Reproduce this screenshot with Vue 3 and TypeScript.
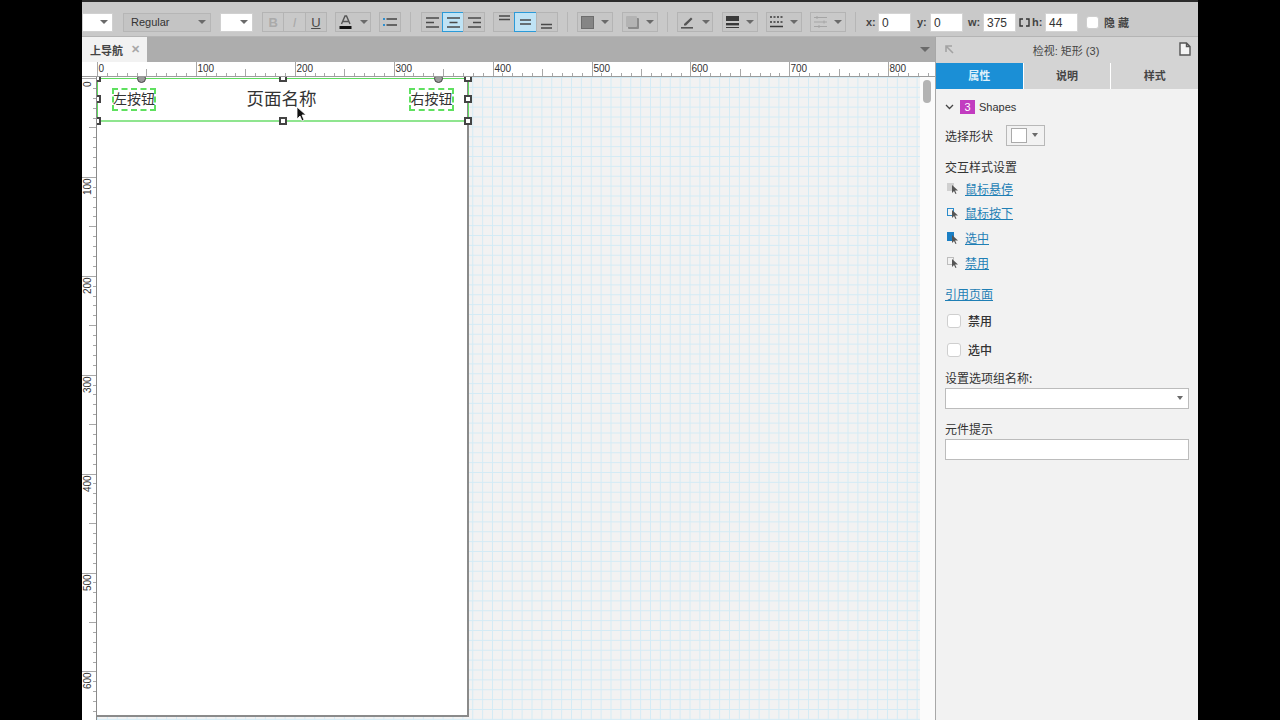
<template>
  <div class="stage">
    <div class="app">
      <!-- toolbar -->
      <div class="toolbar">
        <div class="sel white w-first"><i class="caret"></i></div>
        <div class="sel w-style"><span>Regular</span><i class="caret"></i></div>
        <div class="sel white w-size"><i class="caret"></i></div>
        <div class="group g65 m-bold">
          <button class="tb off"><b>B</b></button>
          <button class="tb off"><em>I</em></button>
          <button class="tb"><u>U</u></button>
        </div>
        <button class="tb drop m8">
          <svg width="14" height="14" viewBox="0 0 14 14"><path d="M2.5 9 6 1h1.5L11 9M4 6.5h5.5" fill="none" stroke="#555" stroke-width="1.4" /><rect x="0.5" y="11" width="12" height="3" fill="#111" /></svg>
          <i class="caret"></i>
        </button>
        <button class="tb m8">
          <svg width="14" height="10" viewBox="0 0 14 10"><rect x="0" y="1" width="2" height="2" fill="#2d8fd0" /><rect x="0" y="7" width="2" height="2" fill="#2d8fd0" /><path d="M3.5 2H14M3.5 8H14" stroke="#444" stroke-width="1.4" /></svg>
        </button>
        <div class="sep"></div>
        <div class="group align-group">
          <button v-for="(a, i) in alignIcons" :key="i" class="tb" :class="{ active: i === 1 }">
            <svg width="13" height="11" viewBox="0 0 13 11"><path :d="a" stroke="#4a4a4a" stroke-width="1.3" fill="none" /></svg>
          </button>
        </div>
        <div class="group g65 m8">
          <button v-for="(a, i) in valignIcons" :key="i" class="tb" :class="{ active: i === 1 }">
            <svg width="11" height="14" viewBox="0 0 11 14"><path :d="a" stroke="#4a4a4a" stroke-width="1.5" fill="none" /></svg>
          </button>
        </div>
        <div class="sep"></div>
        <button class="tb drop">
          <svg width="13" height="13" viewBox="0 0 13 13"><rect x="0.5" y="0.5" width="12" height="12" fill="#858585" stroke="#6d6d6d" /></svg>
          <i class="caret"></i>
        </button>
        <button class="tb drop m9">
          <svg width="13" height="13" viewBox="0 0 13 13"><rect x="2" y="2" width="11" height="11" rx="1" fill="#8a8a8a" /><rect x="0" y="0" width="11" height="11" rx="1" fill="#b3b3b3" /></svg>
          <i class="caret"></i>
        </button>
        <div class="sep"></div>
        <button class="tb drop">
          <svg width="14" height="13" viewBox="0 0 14 13"><path d="M3 8 10 1.5l1.5 1.500L5 9.500H3z" fill="#555" /><rect x="0" y="11" width="12" height="1.6" fill="#555" /></svg>
          <i class="caret"></i>
        </button>
        <button class="tb drop m9">
          <svg width="13" height="12" viewBox="0 0 13 12"><rect y="0" width="13" height="5" fill="#3a3a3a" /><rect y="7" width="13" height="2.4" fill="#3a3a3a" /><rect y="11" width="13" height="1" fill="#3a3a3a" /></svg>
          <i class="caret"></i>
        </button>
        <button class="tb drop m8">
          <svg width="13" height="12" viewBox="0 0 13 12"><path d="M0 1h13M0 6h13" stroke="#3a3a3a" stroke-width="1.5" stroke-dasharray="2 1.5" fill="none" /><path d="M0 10.500h13" stroke="#3a3a3a" stroke-width="1.5" fill="none" /></svg>
          <i class="caret"></i>
        </button>
        <button class="tb drop m8 off">
          <svg width="13" height="12" viewBox="0 0 13 12"><path d="M0 1.500h13M0 6h13M0 10.500h13" stroke="#a5a5a5" stroke-width="1" fill="none" /><path d="M3 0v3M10 4.500v3M5 9v3" stroke="#a5a5a5" fill="none" /></svg>
          <i class="caret"></i>
        </button>
        <div class="sep"></div>
        <label class="lab lab-x">x:</label><div class="num">0</div>
        <label class="lab lab-y">y:</label><div class="num">0</div>
        <label class="lab lab-w">w:</label><div class="num">375</div>
        <svg class="link-wh" width="11" height="9" viewBox="0 0 11 9"><path d="M4 1H1v7h3M7 1h3v7H7" stroke="#333" stroke-width="1.4" fill="none" /></svg>
        <label class="lab lab-h">h:</label><div class="num">44</div>
        <div class="box tool-check"></div>
        <span class="hide-label">隐 藏</span>
      </div>

      <div class="main">
        <!-- editor column -->
        <div class="editor">
          <div class="tabbar">
            <div class="tab">上导航<span class="tab-x">✕</span></div>
            <i class="caret tab-caret"></i>
          </div>
          <svg class="ruler-top" width="853" height="15">
            <g v-for="t in topTicks" :key="t.x">
              <line :x1="t.x" :x2="t.x" :y1="t.y" y2="15" stroke="#a8a8a8" />
            </g>
            <text v-for="l in topLabels" :key="l.text" :x="l.x + 1.5" y="9.500" class="ruler-text">{{ l.text }}</text>
          </svg>
          <div class="work">
            <svg class="ruler-left" width="15" height="643">
              <line v-for="t in leftTicks" :key="t.y" :x1="t.x" x2="15" :y1="t.y" :y2="t.y" stroke="#a8a8a8" />
              <text
                v-for="l in leftLabels"
                :key="l.text"
                class="ruler-text"
                :transform="`translate(9 ${l.y}) rotate(-90)`"
              >{{ l.text }}</text>
              <line x1="14.5" x2="14.5" y1="0" y2="643" stroke="#8a8a8a" />
            </svg>
            <div class="canvas">
              <div class="page">
                <div class="nav">
                  <span class="nav-btn">左按钮</span>
                  <span class="nav-title">页面名称</span>
                  <span class="nav-btn">右按钮</span>
                </div>
              </div>
              <i v-for="d in dots" :key="d" class="dot" :style="{ left: d + 'px' }"></i>
              <i
                v-for="(h, i) in handles"
                :key="i"
                class="handle"
                :style="{ left: h[0] + 'px', top: h[1] + 'px' }"
              ></i>
              <svg class="cursor" width="12" height="17" viewBox="0 0 12 17">
                <path d="M1 1v12l3-3 2 5 2-1-2-5h4z" fill="#111" stroke="#fff" stroke-width="0.8" />
              </svg>
            </div>
            <div class="scroll"><i class="thumb"></i></div>
          </div>
        </div>

        <!-- inspector -->
        <aside class="panel">
          <div class="panel-head">
            <svg class="head-arrow" width="9" height="9" viewBox="0 0 9 9"><path d="M1 7V1h6M1 1l7 7" stroke="#a3a3a3" stroke-width="1.6" fill="none" /></svg>
            <span>检视: 矩形 (3)</span>
            <svg class="head-page" width="12" height="14" viewBox="0 0 12 14"><path d="M1 1h6.500L11 4.500V13H1zM7.500 1v3.500H11" fill="#f4f4f4" stroke="#555" stroke-width="1.4" /></svg>
          </div>
          <div class="panel-tabs">
            <div class="ptab on">属性</div>
            <div class="ptab">说明</div>
            <div class="ptab">样式</div>
          </div>
          <div class="panel-body">
            <div class="shapes">
              <svg width="9" height="6" viewBox="0 0 9 6"><path d="M1 1l3.500 3.500L8 1" stroke="#444" stroke-width="1.3" fill="none" /></svg>
              <span class="badge">3</span>
              <span class="shapes-name">Shapes</span>
            </div>
            <div class="shape-row">
              <span>选择形状</span>
              <div class="shape-btn"><i class="swatch"></i><i class="caret"></i></div>
            </div>
            <div class="heading">交互样式设置</div>
            <div class="links">
              <div v-for="l in styleLinks" :key="l.text" class="link-row">
                <svg width="14" height="14" viewBox="0 0 14 14">
                  <rect v-if="l.kind === 'hover'" x="1" y="2" width="7" height="8" fill="#d0d0d0" />
                  <rect v-if="l.kind === 'down'" x="1.500" y="2.500" width="6" height="7" fill="none" stroke="#2b8ccb" />
                  <rect v-if="l.kind === 'sel'" x="1" y="1" width="7" height="9" fill="#1b7fc4" />
                  <rect v-if="l.kind === 'off'" x="1.500" y="2.500" width="6" height="7" fill="none" stroke="#888" stroke-dasharray="1 1" />
                  <path d="M6 4v8l2-2 1.500 3 1-.5L9 9.500h3z" fill="#555" />
                </svg>
                <a class="link">{{ l.text }}</a>
              </div>
            </div>
            <a class="link ref-link">引用页面</a>
            <div class="check-row first"><i class="box"></i><span>禁用</span></div>
            <div class="check-row"><i class="box"></i><span>选中</span></div>
            <div class="field-label group-label">设置选项组名称:</div>
            <div class="field"><i class="caret"></i></div>
            <div class="field-label tip-label">元件提示</div>
            <div class="field tip"></div>
          </div>
        </aside>
      </div>
    </div>
  </div>
</template>

<script setup lang="ts">
const SCALE = 0.989;

const alignIcons = ['M0 1h13M0 5.500h8M0 10h13', 'M0 1h13M2.500 5.500h8M0 10h13', 'M0 1h13M5 5.500h8M0 10h13'];
const valignIcons = ['M0 1h11M0 4.500h11', 'M0 5h11M0 9h11', 'M0 9.500h11M0 13h11'];

// 标尺刻度
const topTicks: { x: number; y: number }[] = [];
for (let i = 0; i <= 84; i++) {
  const x = Math.round(15 + i * 10 * SCALE) + 0.5;
  topTicks.push({ x, y: i % 10 === 0 ? 0 : i % 5 === 0 ? 7 : 11 });
}
const topLabels = [0, 100, 200, 300, 400, 500, 600, 700, 800].map((n) => ({
  text: String(n),
  x: Math.round(15 + n * SCALE),
}));

const leftTicks: { x: number; y: number }[] = [];
for (let i = 0; i <= 64; i++) {
  const y = Math.round(1 + i * 10 * SCALE) + 0.5;
  leftTicks.push({ y, x: i % 10 === 0 ? 0 : i % 5 === 0 ? 7 : 11 });
}
const leftLabels = [0, 100, 200, 300, 400, 500, 600].map((n) => ({
  text: String(n),
  y: Math.round(1 + n * SCALE) + (n === 0 ? 9 : 18),
}));

const dots = [40, 337];
const handles: number[][] = [
  [186, 1],
  [371, 1],
  [0, 1],
  [0, 22],
  [371, 22],
  [0, 44],
  [186, 44],
  [371, 44],
];

const styleLinks = [
  { text: '鼠标悬停', kind: 'hover' },
  { text: '鼠标按下', kind: 'down' },
  { text: '选中', kind: 'sel' },
  { text: '禁用', kind: 'off' },
];
</script>

<style>
html,
body {
  margin: 0;
  background: #000;
}
</style>

<style scoped>
.stage {
  width: 1280px;
  height: 720px;
  background: #000;
  display: flex;
  justify-content: center;
  overflow: hidden;
  font-family: "Liberation Sans", "Noto Sans CJK SC", sans-serif;
}
.app {
  width: 1116px;
  height: 720px;
  display: flex;
  flex-direction: column;
  background: #f2f2f2;
  color: #333;
}
.caret {
  display: inline-block;
  width: 0;
  height: 0;
  border-left: 4px solid transparent;
  border-right: 4px solid transparent;
  border-top: 4px solid #6a6a6a;
}

/* toolbar */
.toolbar {
  box-sizing: border-box;
  height: 37px;
  flex: none;
  padding: 6px 0 0;
  border-top: 2px solid #2b2b2b;
  border-bottom: 1px solid #b4b4b4;
  background: #c9c9c9;
  display: flex;
  align-items: center;
  font-size: 11px;
}
.sel {
  box-sizing: border-box;
  height: 19px;
  display: flex;
  align-items: center;
  justify-content: space-between;
  padding: 0 4px 0 7px;
  border: 1px solid #b6b6b6;
  background: #c4c4c4;
  font-size: 11px;
  color: #333;
}
.sel.white {
  background: #fff;
  border-color: #d0d0d0;
}
.w-first {
  width: 31px;
  justify-content: flex-end;
}
.w-style {
  width: 88px;
  margin-left: 10px;
}
.w-size {
  width: 33px;
  margin-left: 9px;
  justify-content: flex-end;
}
.group {
  display: flex;
}
.g65 {
  width: 65px;
}
.g65 .tb {
  flex: 1;
}
.align-group {
  margin-left: 1px;
}
.m-bold {
  margin-left: 9px;
}
.m8 {
  margin-left: 8px;
}
.m9 {
  margin-left: 9px;
}
.tb {
  box-sizing: border-box;
  width: 22px;
  height: 20px;
  padding: 0;
  border: 1px solid #b4b4b4;
  background: #c6c6c6;
  display: flex;
  align-items: center;
  justify-content: center;
  font-family: "Liberation Sans", sans-serif;
  font-size: 13px;
  color: #4a4a4a;
}
.group .tb + .tb {
  margin-left: -1px;
}
.tb.off {
  color: #aaa;
  background: #c9c9c9;
}
.tb.drop {
  width: 36px;
  gap: 7px;
}
.tb.active {
  background: #bfe3f5;
  border-color: #2b9ad8;
}
.sep {
  width: 1px;
  height: 20px;
  background: #b6b6b6;
  margin: 0 9px;
}
.lab {
  font-size: 11px;
  font-weight: 700;
  color: #444;
}
.lab-x {
  margin-left: 1px;
  width: 12px;
}
.lab-y {
  margin-left: 6px;
  width: 13px;
}
.lab-w {
  margin-left: 5px;
  width: 15px;
}
.lab-h {
  width: 13px;
  margin-left: 2px;
}
.link-wh {
  margin: 0 0 0 3px;
}
.num {
  box-sizing: border-box;
  width: 33px;
  height: 19px;
  padding-left: 3px;
  line-height: 18px;
  background: #fff;
  border: 1px solid #d4d4d4;
  font-size: 12px;
  color: #333;
}
.box {
  display: block;
  box-sizing: border-box;
  width: 14px;
  height: 14px;
  background: #fff;
  border: 1px solid #cfcfcf;
  border-radius: 3px;
}
.tool-check {
  margin-left: 8px;
  width: 13px;
  height: 13px;
}
.hide-label {
  margin-left: 5px;
  font-size: 11px;
  font-weight: 700;
  color: #444;
}

.main {
  flex: 1;
  display: flex;
  min-height: 0;
}

/* editor */
.editor {
  width: 853px;
  flex: none;
  display: flex;
  flex-direction: column;
}
.tabbar {
  height: 25px;
  flex: none;
  background: #adadad;
  display: flex;
  align-items: center;
  justify-content: space-between;
}
.tab {
  box-sizing: border-box;
  width: 65px;
  height: 25px;
  padding-left: 8px;
  display: flex;
  align-items: center;
  background: #f2f2f2;
  font-size: 11px;
  font-weight: 700;
  color: #444;
}
.tab-x {
  margin-left: 8px;
  font-size: 11px;
  font-weight: 700;
  color: #a8a8a8;
}
.tab-caret {
  margin-right: 5px;
  border-left-width: 5px;
  border-right-width: 5px;
  border-top-width: 5px;
}
.ruler-top {
  display: block;
  flex: none;
  background: #fff;
  border-bottom: 1px solid #9c9c9c;
  box-sizing: content-box;
  height: 14px;
}
.ruler-text {
  font-family: "Liberation Sans", sans-serif;
  font-size: 10px;
  fill: #333;
}
.work {
  flex: 1;
  min-height: 0;
  display: flex;
}
.ruler-left {
  flex: none;
  display: block;
  background: #fff;
}
.canvas {
  position: relative;
  flex: 1;
  overflow: hidden;
  background-color: #f2f2f2;
  background-image:
    linear-gradient(#d4ebf5 1px, transparent 1px),
    linear-gradient(90deg, #d4ebf5 1px, transparent 1px);
  background-size: 9.89px 9.89px;
}
.page {
  position: absolute;
  left: 0;
  top: 0;
  box-sizing: border-box;
  width: 372px;
  height: 640px;
  background: #fff;
  border-right: 2px solid #8a8a8a;
  border-bottom: 2px solid #8a8a8a;
}
.nav {
  box-sizing: border-box;
  margin: 1px 0 0;
  width: 372px;
  height: 44px;
  padding: 0 14px;
  display: flex;
  align-items: center;
  justify-content: space-between;
  border: 1px solid #5fdc5f;
  border-bottom: 2px solid #8fe58f;
  font-family: "Noto Sans CJK SC", sans-serif;
}
.nav-btn {
  box-sizing: border-box;
  width: 44px;
  height: 23px;
  padding-bottom: 3px;
  display: flex;
  align-items: center;
  justify-content: center;
  white-space: nowrap;
  font-size: 14px;
  color: #333;
  border: 2px dashed #5fe05f;
}
.nav-btn:last-child {
  width: 45px;
}
.nav-title {
  margin-bottom: 4px;
  margin-left: -2px;
  font-size: 17.500px;
  color: #333;
}
.handle {
  position: absolute;
  box-sizing: border-box;
  width: 8px;
  height: 8px;
  margin: -4px 0 0 -4px;
  background: #fff;
  border: 2px solid #444;
}
.dot {
  position: absolute;
  top: -3px;
  width: 9px;
  height: 9px;
  border-radius: 50%;
  background: #9a9a9a;
  border: 1px solid #444;
  box-sizing: border-box;
}
.cursor {
  position: absolute;
  left: 199px;
  top: 29px;
}
.scroll {
  width: 15px;
  flex: none;
  background: #fbfbfb;
  position: relative;
}
.thumb {
  position: absolute;
  left: 3px;
  top: 3px;
  width: 8px;
  height: 23px;
  border-radius: 4px;
  background: #b3b3b3;
}

/* inspector */
.panel {
  flex: 1;
  box-sizing: border-box;
  border-left: 1px solid #a8a8a8;
  display: flex;
  flex-direction: column;
  background: #f2f2f2;
}
.panel-head {
  height: 26px;
  flex: none;
  position: relative;
  display: flex;
  align-items: center;
  justify-content: center;
  background: #d4d4d4;
  font-size: 11px;
  color: #444;
  padding-right: 2px;
  font-family: "Liberation Sans", "Noto Sans CJK SC", sans-serif;
}
.head-arrow {
  position: absolute;
  left: 9px;
  top: 8px;
}
.head-page {
  position: absolute;
  right: 7px;
  top: 5px;
}
.panel-tabs {
  height: 26px;
  flex: none;
  display: flex;
  gap: 1px;
  background: #fff;
}
.ptab {
  flex: 1;
  background: #d4d4d4;
  text-align: center;
  line-height: 26px;
  font-size: 11px;
  font-weight: 700;
  color: #444;
}
.ptab.on {
  background: #1b8fd6;
  color: #dff1fb;
}
.panel-body {
  flex: 1;
  padding: 10px 9px 0 9px;
  font-size: 12px;
  color: #333;
  font-family: "Noto Sans CJK SC", sans-serif;
}
.shapes {
  height: 15px;
  display: flex;
  align-items: center;
  padding-left: 0;
}
.badge {
  margin-left: 6px;
  width: 15px;
  height: 14px;
  background: #c23cc0;
  color: #fff;
  text-align: center;
  line-height: 14px;
  font-size: 11px;
  font-family: "Liberation Sans", sans-serif;
}
.shapes-name {
  margin-left: 4px;
  font-size: 11px;
  font-family: "Liberation Sans", sans-serif;
}
.shape-row {
  margin-top: 10px;
  height: 22px;
  display: flex;
  align-items: center;
}
.shape-btn {
  box-sizing: border-box;
  margin-left: 13px;
  width: 39px;
  height: 21px;
  border: 1px solid #b8b8b8;
  display: flex;
  align-items: center;
  padding-left: 4px;
  gap: 5px;
}
.shape-btn .caret {
  border-left-width: 3.500px;
  border-right-width: 3.500px;
}
.swatch {
  box-sizing: border-box;
  width: 16px;
  height: 15px;
  background: #fff;
  border: 1px solid #aaa;
}
.heading {
  margin-top: 13px;
  line-height: 16px;
}
.links {
  margin-top: 4px;
  display: flex;
  flex-direction: column;
  gap: 6.750px;
}
.link-row {
  height: 18px;
  display: flex;
  align-items: center;
  gap: 5px;
  padding-left: 1px;
}
.link {
  color: #1f7fb5;
  text-decoration: underline;
}
.ref-link {
  display: block;
  margin-top: 13.250px;
  line-height: 18px;
}
.check-row {
  margin-top: 11px;
  height: 18px;
  display: flex;
  align-items: center;
  gap: 7px;
  padding-left: 2px;
  font-weight: 500;
}
.check-row.first {
  margin-top: 9px;
}
.field-label {
  line-height: 16px;
}
.group-label {
  margin-top: 11px;
}
.tip-label {
  margin-top: 12px;
}
.field {
  box-sizing: border-box;
  margin-top: 2px;
  height: 21px;
  background: #fff;
  border: 1px solid #bcbcbc;
  display: flex;
  align-items: center;
  justify-content: flex-end;
  padding-right: 5px;
}
.field .caret {
  border-left-width: 3.500px;
  border-right-width: 3.500px;
}
</style>
